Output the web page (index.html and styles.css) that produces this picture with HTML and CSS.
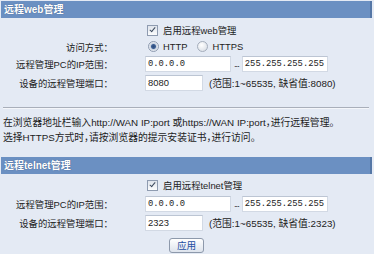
FILE: index.html
```html
<!DOCTYPE html>
<html>
<head>
	<meta charset="utf-8">
	<title>远程管理</title>
	<link rel="stylesheet" href="styles.css">
</head>
<body>
	<div class="page">
		<div class="title">远程web管理</div>
		<div class="form">
			<div class="row tall">
				<span class="label"></span>
				<span class="field"><span class="check"></span>启用远程web管理</span>
			</div>
			<div class="row short">
				<span class="label">访问方式：</span>
				<span class="field">
					<span class="radio on"></span>HTTP
					<span class="radio second"></span>HTTPS
				</span>
			</div>
			<div class="row">
				<span class="label">远程管理PC的IP范围：</span>
				<span class="field">
					<span class="input ip">0.0.0.0</span>
					<span class="dots">...</span>
					<span class="input ip">255.255.255.255</span>
				</span>
			</div>
			<div class="row">
				<span class="label">设备的远程管理端口：</span>
				<span class="field">
					<span class="input port">8080</span>
					<span class="hint">(范围:1~65535, 缺省值:8080)</span>
				</span>
			</div>
		</div>

		<div class="separator"></div>

		<div class="note">
			<div>在浏览器地址栏输入http://WAN IP:port 或https://WAN IP:port，进行远程管理。</div>
			<div>选择HTTPS方式时，请按浏览器的提示安装证书，进行访问。</div>
		</div>

		<div class="title second">远程telnet管理</div>
		<div class="form second">
			<div class="row tall">
				<span class="label"></span>
				<span class="field"><span class="check"></span>启用远程telnet管理</span>
			</div>
			<div class="row">
				<span class="label">远程管理PC的IP范围：</span>
				<span class="field">
					<span class="input ip">0.0.0.0</span>
					<span class="dots">...</span>
					<span class="input ip">255.255.255.255</span>
				</span>
			</div>
			<div class="row">
				<span class="label">设备的远程管理端口：</span>
				<span class="field">
					<span class="input port">2323</span>
					<span class="hint">(范围:1~65535, 缺省值:2323)</span>
				</span>
			</div>
		</div>

		<div class="actions">
			<button class="button">应用</button>
		</div>
	</div>
</body>
</html>
```

FILE: styles.css
```css
body {
	margin: 0;
	background-color: #e4eaf4;
	color: #1c1c1c;
	font-family: "Liberation Sans", "Noto Sans CJK SC", sans-serif;
	font-size: 9.4px;
}

.page {
	padding: 1px 2px 0 1px;
}

.title {
	background-color: #6b90c2;
	border-right: 2px solid #5577a6;
	color: #fff;
	font-weight: bold;
	font-size: 10px;
	height: 17px;
	line-height: 17px;
	padding-left: 3px;
	text-shadow: 0 0 1px #34507a;
}

.title.second {
	margin-top: 12px;
}

.form {
	margin-top: 3px;
}

.form.second {
	margin-top: 2px;
}

.row {
	display: grid;
	grid-template-columns: 112px 1fr;
	column-gap: 32px;
	align-items: center;
	height: 19px;
}

.row.tall {
	height: 18px;
}

.row.short {
	height: 15px;
}

.label {
	text-align: right;
	white-space: nowrap;
}

.field {
	display: flex;
	align-items: center;
	white-space: nowrap;
}

.check {
	width: 9px;
	height: 9px;
	border: 1px solid #8e9bb0;
	background: linear-gradient(#dfe4ec, #fbfcfd);
	margin: 0 5px 0 2px;
	position: relative;
}

.check::after {
	content: "";
	position: absolute;
	left: 3px;
	top: 0px;
	width: 2px;
	height: 5px;
	border: solid #3c4a5e;
	border-width: 0 1.5px 1.5px 0;
	transform: rotate(40deg);
}

.radio {
	width: 9px;
	height: 9px;
	border: 1px solid #a4adbb;
	border-radius: 50%;
	background: radial-gradient(circle at 40% 35%, #ffffff, #d3d9e2);
	margin: 0 4px 0 3px;
	box-sizing: content-box;
}

.radio.on {
	background: radial-gradient(circle, #2c4a7a 0, #3d5f94 2px, #c9d2df 3px, #f4f6f9 5px);
	border-color: #8e9bb0;
}

.radio.second {
	margin-left: 10px;
}

.input {
	background-color: #fff;
	border: 1px solid #d2d9e4;
	border-top-color: #bcc5d3;
	height: 14px;
	line-height: 14px;
	padding-left: 2px;
	min-width: 0;
	overflow: hidden;
	flex: none;
}

.input.ip {
	width: 82px;
	font-family: "Liberation Mono", "DejaVu Sans Mono", monospace;
	font-size: 8.8px;
}

.input.port {
	width: 54px;
}

.dots {
	margin: 0 3px 0 3px;
	letter-spacing: -1px;
}

.hint {
	margin-left: 6px;
	font-size: 9.8px;
}

.separator {
	margin: 15px 3px 0 2px;
	border-top: 1px solid #a9afba;
	border-bottom: 1px solid #f4f6fa;
}

.note {
	margin-top: 6px;
	padding-left: 2px;
	font-size: 9.8px;
	line-height: 15px;
	font-feature-settings: "halt";
}

.actions {
	display: flex;
	justify-content: center;
	margin-top: 6px;
}

.button {
	width: 35px;
	height: 15px;
	padding: 0;
	border: 1px solid #8d99ab;
	border-radius: 3px;
	background: linear-gradient(#ffffff, #dde3ec);
	color: #1f4fa3;
	font-family: "Noto Sans CJK SC", sans-serif;
	font-size: 9.6px;
	line-height: 13px;
}
```
